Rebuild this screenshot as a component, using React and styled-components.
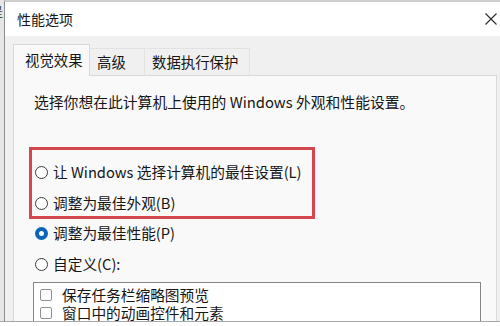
import React from "react";
import styled, { createGlobalStyle } from "styled-components";

const GlobalStyle = createGlobalStyle`
  body {
    margin: 0;
    background: #ffffff;
    font-family: "Noto Sans CJK SC", "Noto Sans", "Liberation Sans", sans-serif;
    color: #161616;
  }
`;

const Screen = styled.div`
  display: flex;
  width: 500px;
  height: 326px;
  overflow: hidden;
  background: #ffffff;
`;

const BehindWindow = styled.div`
  width: 4px;
  height: 322px;
  flex-shrink: 0;
  overflow: hidden;
  background: #e6e6e6;
  border-bottom: 1px solid #a8a8a8;
  box-sizing: border-box;

  span {
    display: block;
    margin: 4px 0 0 -10px;
    font-size: 13px;
    line-height: 14px;
    color: #444;
  }
`;

const Dialog = styled.div`
  flex: 1;
  height: 322px;
  box-sizing: border-box;
  display: flex;
  flex-direction: column;
  background: #f0f0f0;
  border-top: 2px solid #cfcfcf;
  border-left: 1px solid #8e8e8e;
  border-bottom: 1px solid #a8a8a8;
  overflow: hidden;
`;

const TitleBar = styled.div`
  height: 34px;
  flex-shrink: 0;
  display: flex;
  align-items: center;
  justify-content: space-between;
  padding: 0 3px 0 12px;
  background: #ffffff;

  h1 {
    margin: 0;
    font-size: 14px;
    font-weight: normal;
    line-height: 18px;
  }
`;

const CloseButton = styled.div`
  width: 12px;
  height: 12px;
  display: flex;
`;

const Body = styled.div`
  flex: 1;
  display: flex;
  flex-direction: column;
  padding: 8px 3px 0 8px;
  min-height: 0;
`;

const TabRow = styled.div`
  display: flex;
  align-items: flex-end;
  height: 31px;
  flex-shrink: 0;
`;

const Tab = styled.div`
  box-sizing: border-box;
  width: ${(p) => p.$width}px;
  height: ${(p) => (p.$active ? 32 : 27)}px;
  display: flex;
  align-items: center;
  padding: ${(p) => (p.$active ? "0 0 2px 11px" : "0 0 0 7px")};
  font-size: 14.4px;
  line-height: 18px;
  white-space: nowrap;
  background: ${(p) => (p.$active ? "#f9f9f9" : "#f0f0f0")};
  border: 1px solid ${(p) => (p.$active ? "#d9d9d9" : "#e2e2e2")};
  border-bottom: none;
  border-left: ${(p) => (p.$first ? "1px solid #d9d9d9" : "none")};
  margin-bottom: ${(p) => (p.$active ? "-1px" : "0")};
  position: relative;
  z-index: ${(p) => (p.$active ? 1 : 0)};
`;

const Panel = styled.div`
  flex: 1;
  min-height: 0;
  background: #f9f9f9;
  border: 1px solid #d9d9d9;
  border-bottom: none;
  padding: 16px 0 0 15px;
  display: flex;
  flex-direction: column;
`;

const Intro = styled.p`
  margin: 0 0 0 5px;
  font-size: 14.8px;
  line-height: 20px;
  white-space: nowrap;
`;

const HighlightBox = styled.div`
  width: 286px;
  box-sizing: border-box;
  margin-top: 35px;
  border: 3px solid #d4474e;
  padding: 9px 0 0 3px;
  display: flex;
  flex-direction: column;
  gap: 5px;
`;

const OptionGroup = styled.div`
  display: flex;
  flex-direction: column;
  gap: 5px;
  padding: 1px 0 0 6px;
`;

const OptionRow = styled.label`
  display: flex;
  align-items: center;
  height: 26px;
  font-size: 14.7px;
  line-height: 18px;
  white-space: nowrap;
`;

const Radio = styled.span`
  width: 13px;
  height: 13px;
  box-sizing: border-box;
  border-radius: 50%;
  background: #ffffff;
  border: ${(p) => (p.$checked ? "4px solid #0a63b8" : "1px solid #3c3c3c")};
  margin-right: 5px;
  flex-shrink: 0;
`;

const ListBox = styled.div`
  width: 448px;
  box-sizing: border-box;
  margin: 5px 0 0 4px;
  flex: 1;
  background: #ffffff;
  border: 1px solid #858585;
  border-bottom: none;
  padding: 3px 0 0 6px;
  overflow: hidden;
`;

const CheckRow = styled.div`
  display: flex;
  align-items: center;
  height: 18px;
  font-size: 14.7px;
  line-height: 18px;
  white-space: nowrap;
`;

const CheckBox = styled.span`
  width: 12px;
  height: 12px;
  box-sizing: border-box;
  border: 1px solid #8f8f8f;
  border-radius: 2px;
  background: #fdfdfd;
  margin-right: 10px;
  flex-shrink: 0;
`;

const options = [
  { label: "调整为最佳性能(P)", checked: true },
  { label: "自定义(C):", checked: false },
];

const effects = ["保存任务栏缩略图预览", "窗口中的动画控件和元素"];

const App = () => {
  return (
    <Screen>
      <GlobalStyle />
      <BehindWindow>
        <span>是</span>
      </BehindWindow>
      <Dialog>
        <TitleBar>
          <h1>性能选项</h1>
          <CloseButton>
            <svg width="12" height="12" viewBox="0 0 12 12">
              <path d="M0.5 0.5 L11.5 11.5 M11.5 0.5 L0.5 11.5" stroke="#2b2b2b" strokeWidth="1.1" fill="none" />
            </svg>
          </CloseButton>
        </TitleBar>
        <Body>
          <TabRow>
            <Tab $active $first $width={77}>视觉效果</Tab>
            <Tab $width={55}>高级</Tab>
            <Tab $width={105}>数据执行保护</Tab>
          </TabRow>
          <Panel>
            <Intro>选择你想在此计算机上使用的 Windows 外观和性能设置。</Intro>
            <HighlightBox>
              <OptionRow>
                <Radio />
                让 Windows 选择计算机的最佳设置(L)
              </OptionRow>
              <OptionRow>
                <Radio />
                调整为最佳外观(B)
              </OptionRow>
            </HighlightBox>
            <OptionGroup>
              {options.map((o) => (
                <OptionRow key={o.label}>
                  <Radio $checked={o.checked} />
                  {o.label}
                </OptionRow>
              ))}
            </OptionGroup>
            <ListBox>
              {effects.map((e) => (
                <CheckRow key={e}>
                  <CheckBox />
                  {e}
                </CheckRow>
              ))}
            </ListBox>
          </Panel>
        </Body>
      </Dialog>
    </Screen>
  );
};

export default App;
